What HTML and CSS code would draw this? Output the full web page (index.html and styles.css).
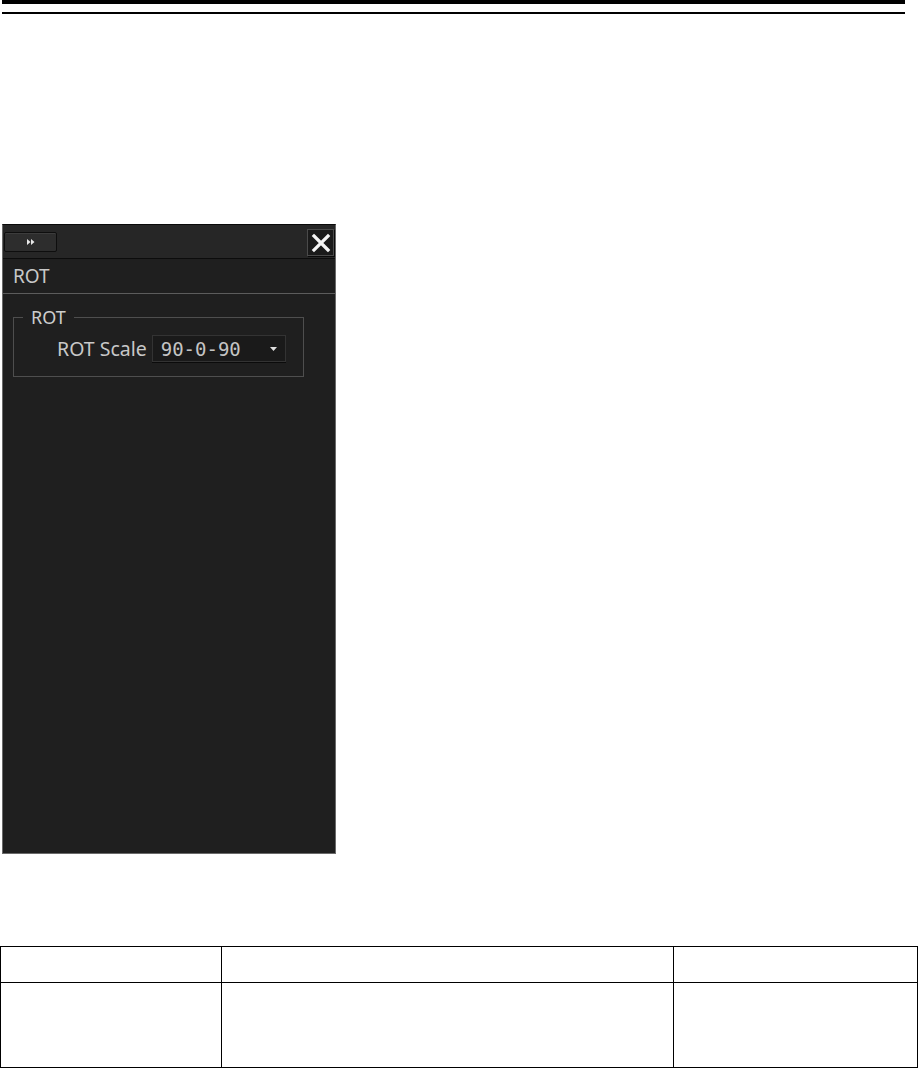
FILE: index.html
```html
<!DOCTYPE html>
<html lang="en">
<head>
  <meta charset="UTF-8" />
  <meta name="viewport" content="width=device-width, initial-scale=1.0"/>
  <title>ROT</title>
  <link rel="stylesheet" href="styles.css">
</head>
<body>
  <header class="page-rules">
    <div class="rule-thick"></div>
    <div class="rule-thin"></div>
  </header>

  <div class="panel">
    <div class="panel-bar">
      <button class="expand-btn" type="button">
        <svg width="10" height="8" viewBox="0 0 10 8"><path d="M1 1 L4.5 4 L1 7 Z M5 1 L8.5 4 L5 7 Z" fill="#e8e8e8"/></svg>
      </button>
      <button class="close-btn" type="button">
        <svg width="20" height="20" viewBox="0 0 20 20"><path d="M3 3 L17 17 M17 3 L3 17" stroke="#f4f4f4" stroke-width="3.2" stroke-linecap="square"/></svg>
      </button>
    </div>
    <div class="panel-title">ROT</div>

    <div class="panel-body">
      <fieldset class="group">
        <legend>ROT</legend>
        <div class="field-row">
          <span class="field-label">ROT Scale</span>
          <div class="dropdown">
            <span class="dropdown-value">90-0-90</span>
            <svg class="dropdown-arrow" width="7" height="4" viewBox="0 0 7 4"><path d="M0 0 L7 0 L3.5 4 Z" fill="#e0e0e0"/></svg>
          </div>
        </div>
      </fieldset>
    </div>
  </div>

  <table class="doc-table">
    <tr class="head-row">
      <td class="col-a"></td>
      <td class="col-b"></td>
      <td class="col-c"></td>
    </tr>
    <tr class="body-row">
      <td></td>
      <td></td>
      <td></td>
    </tr>
  </table>
</body>
</html>
```

FILE: styles.css
```css
html, body {
  margin: 0;
  padding: 0;
}

body {
  background: #fff;
  font-family: "Noto Sans", "Open Sans", sans-serif;
}

.page-rules {
  padding: 0 14px 0 2px;
}

.rule-thick {
  height: 4px;
  background: #000;
}

.rule-thin {
  height: 2px;
  margin-top: 8px;
  background: #000;
}

.panel {
  margin: 210px 0 0 2px;
  width: 332px;
  height: 628px;
  background: #1f1f1f;
  border: 1px solid #6a6a6a;
  border-top-color: #0a0a0a;
  display: flex;
  flex-direction: column;
}

.panel-bar {
  height: 33px;
  background: #262626;
  border-bottom: 1px solid #0c0c0c;
  display: flex;
  justify-content: space-between;
  align-items: flex-start;
  padding: 0 1px 0 1px;
}

.expand-btn {
  margin-top: 7px;
  width: 53px;
  height: 20px;
  background: #2d2d2d;
  border: 1px solid #0e0e0e;
  border-radius: 2px;
  box-shadow: inset 0 1px 0 #3c3c3c;
  display: flex;
  align-items: center;
  justify-content: center;
  padding: 0;
}

.close-btn {
  margin-top: 4px;
  width: 27px;
  height: 27px;
  background: #1a1a1a;
  border: 1px solid #4a4a4a;
  box-shadow: 1px 1px 0 #0a0a0a;
  display: flex;
  align-items: center;
  justify-content: center;
  padding: 0;
}

.panel-title {
  height: 34px;
  line-height: 34px;
  padding-left: 10px;
  font-size: 19px;
  color: #c8c8c8;
  border-bottom: 1px solid #5c5c5c;
}

.panel-body {
  padding: 12px 0 0 10px;
}

.group {
  margin: 0;
  padding: 0 0 14px 0;
  width: 291px;
  border: 1px solid #4e4e4e;
  box-sizing: border-box;
  min-width: 0;
}

.group legend {
  margin-left: 9px;
  padding: 0 8px;
  font-size: 18px;
  line-height: 22px;
  color: #cdcdcd;
}

.field-row {
  display: flex;
  align-items: center;
  gap: 5px;
  padding: 7px 0 0 43px;
}

.field-label {
  font-size: 19.5px;
  color: #c8c8c8;
}

.dropdown {
  width: 134px;
  height: 27px;
  box-sizing: border-box;
  background: #1a1a1a;
  border: 1px solid #333;
  box-shadow: 0 1px 0 #0b0b0b;
  display: flex;
  align-items: center;
  justify-content: space-between;
  padding: 0 8px 0 8px;
}

.dropdown-value {
  font-family: "DejaVu Sans Mono", "Liberation Mono", monospace;
  font-size: 19px;
  color: #c4c4c4;
}

.doc-table {
  margin-top: 92px;
  width: 918px;
  border-collapse: collapse;
}

.doc-table td {
  border: 1px solid #000;
  padding: 0;
}

.head-row td {
  height: 35px;
}

.body-row td {
  height: 84px;
}

.col-a {
  width: 220px;
}

.col-b {
  width: 451px;
}
```
